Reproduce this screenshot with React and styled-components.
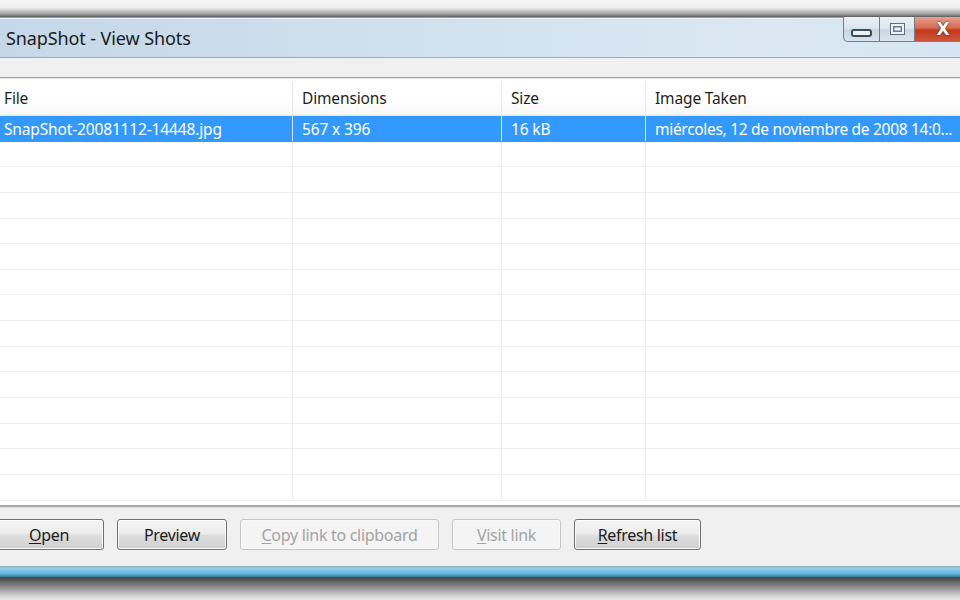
import React from 'react';
import styled, { createGlobalStyle } from 'styled-components';

const Global = createGlobalStyle`
  html, body { margin: 0; padding: 0; background: #f0f0f0; overflow: hidden; }
  * { box-sizing: border-box; }
`;

const Screen = styled.div`
  width: 960px;
  height: 600px;
  display: flex;
  flex-direction: column;
  font-family: "Noto Sans", "Open Sans", sans-serif;
  overflow: hidden;
`;

const TopShade = styled.div`
  height: 17px;
  flex: none;
  background: linear-gradient(#f6f6f6 0%, #eeeeee 45%, #9a9a9a 85%, #5a5a5a 100%);
`;

const TitleBar = styled.div`
  height: 41px;
  flex: none;
  display: flex;
  align-items: flex-start;
  justify-content: space-between;
  background: linear-gradient(90deg, #c5d8e9 0%, #cfe0ee 40%, #dbe8f3 80%, #d6e5f1 100%);
  border-top: 1px solid #8fa3b5;
  border-bottom: 1px solid #9aaab8;
  box-shadow: inset 0 1px 0 #e8f1f8;
`;

const Title = styled.div`
  padding: 8px 0 0 6px;
  font-size: 18px;
  color: #1b1b1b;
  letter-spacing: -0.1px;
`;

const Controls = styled.div`
  display: flex;
  height: 25px;
  margin-top: -1px;
  margin-right: -6px;
`;

const CtrlButton = styled.div`
  width: ${({ w }) => w}px;
  height: 25px;
  display: flex;
  align-items: center;
  justify-content: center;
  border: 1px solid #6f7f8e;
  border-top: none;
  border-left-width: ${({ first }) => (first ? 1 : 0)}px;
  border-bottom-left-radius: ${({ first }) => (first ? 5 : 0)}px;
  background: ${({ danger }) =>
    danger
      ? 'linear-gradient(#e8a193 0%, #d76b52 45%, #c0391c 55%, #d0563a 100%)'
      : 'linear-gradient(#e9f0f6 0%, #dce6ef 45%, #c9d6e2 55%, #d8e3ec 100%)'};
`;

const MinGlyph = styled.div`
  width: 21px;
  height: 8px;
  margin-top: 8px;
  border: 2px solid #3f4d5a;
  border-radius: 3px;
  background: #eef3f7;
`;

const MaxGlyph = styled.div`
  width: 15px;
  height: 12px;
  border: 1.5px solid #5f6e7a;
  background: #eef3f7;
  box-shadow: inset 0 0 0 2px #eef3f7, inset 0 0 0 3.5px #6f7e8a;
`;

const CloseGlyph = styled.div`
  font-family: "DejaVu Sans", sans-serif;
  font-weight: 700;
  font-size: 17px;
  color: #ffffff;
  text-shadow: 0 0 1px #4a2418, 0 0 2px #4a2418;
  margin-left: 6px;
`;

const Strip = styled.div`
  height: 20px;
  flex: none;
  background: #f0f0f0;
  border-bottom: 1px solid #a5a5a5;
`;

const ListView = styled.div`
  flex: none;
  height: 427px;
  background: #ffffff;
  display: flex;
  flex-direction: column;
  overflow: hidden;
  color: #1e1e1e;
  font-size: 15.5px;
  letter-spacing: -0.15px;
`;

const cols = '292px 209px 144px 1fr';

const HeaderRow = styled.div`
  display: grid;
  grid-template-columns: ${cols};
  height: 38px;
  flex: none;
  padding-top: 2px;
  background: linear-gradient(#ffffff 0%, #ffffff 60%, #f6f7f9 100%);
  border-top: 1px solid #e6e6e6;
  border-bottom: 1px solid #e2e5ea;
`;

const HeaderCell = styled.div`
  display: flex;
  align-items: center;
  padding-left: ${({ first }) => (first ? 4 : 9)}px;
  border-left: ${({ first }) => (first ? 'none' : '1px solid #e4e6ea')};
  white-space: nowrap;
`;

const Row = styled.div`
  display: grid;
  grid-template-columns: ${cols};
  height: 25.65px;
  flex: none;
  background: ${({ selected }) => (selected ? '#3399ff' : '#ffffff')};
  color: ${({ selected }) => (selected ? '#ffffff' : '#1e1e1e')};
  border-bottom: 1px solid ${({ selected }) => (selected ? '#3399ff' : '#efefef')};
`;

const Cell = styled.div`
  display: flex;
  align-items: center;
  padding-top: 2px;
  padding-left: ${({ first }) => (first ? 4 : 9)}px;
  border-left: ${({ first, selected }) =>
    first ? 'none' : `1px solid ${selected ? '#cfe6ff' : '#efefef'}`};
  white-space: nowrap;
  overflow: hidden;
  letter-spacing: ${({ tight }) => (tight ? '-0.3px' : 'inherit')};
`;

const ButtonPanel = styled.div`
  flex: none;
  height: 61px;
  background: #f0f0f0;
  border-top: 2px solid #a8a8a8;
  box-shadow: inset 0 1px 0 #e0e0e0;
  display: flex;
  align-items: flex-start;
  gap: 13px;
  padding-top: 12px;
  margin-left: -6px;
`;

const Button = styled.div`
  width: ${({ w }) => w}px;
  height: 31px;
  display: flex;
  align-items: center;
  justify-content: center;
  font-size: 16px;
  border-radius: 3px;
  border: 1px solid ${({ disabled }) => (disabled ? '#c6c6c6' : '#707070')};
  color: ${({ disabled }) => (disabled ? '#a3a3a3' : '#1c1c1c')};
  background: ${({ disabled }) =>
    disabled
      ? '#f4f4f4'
      : 'linear-gradient(#f4f4f4 0%, #ececec 45%, #dddddd 55%, #cfcfcf 100%)'};
  box-shadow: inset 0 0 0 1px ${({ disabled }) => (disabled ? '#f8f8f8' : '#fbfbfb')};
  letter-spacing: -0.3px;
  u { text-decoration: underline; text-underline-offset: 2px; }
`;

const FrameBottom = styled.div`
  height: 12px;
  flex: none;
  background: linear-gradient(#9aa8b2 0%, #8fd0ec 20%, #6ab8dc 60%, #3f8fb4 85%, #21414f 100%);
`;

const BottomShade = styled.div`
  flex: 1;
  background: linear-gradient(#4a4a4a 0%, #8a8a8a 40%, #cfcfcf 80%, #e8e8e8 100%);
`;

const rows = [
  ['SnapShot-20081112-14448.jpg', '567 x 396', '16 kB', 'miércoles, 12 de noviembre de 2008 14:0...'],
];

export default function App() {
  const empty = Array.from({ length: 14 });
  return (
    <Screen>
      <Global />
      <TopShade />
      <TitleBar>
        <Title>SnapShot - View Shots</Title>
        <Controls>
          <CtrlButton w={37} first>
            <MinGlyph />
          </CtrlButton>
          <CtrlButton w={35}>
            <MaxGlyph />
          </CtrlButton>
          <CtrlButton w={51} danger>
            <CloseGlyph>X</CloseGlyph>
          </CtrlButton>
        </Controls>
      </TitleBar>
      <Strip />
      <ListView>
        <HeaderRow>
          <HeaderCell first>File</HeaderCell>
          <HeaderCell>Dimensions</HeaderCell>
          <HeaderCell>Size</HeaderCell>
          <HeaderCell>Image Taken</HeaderCell>
        </HeaderRow>
        {rows.map((r, i) => (
          <Row key={i} selected>
            {r.map((c, j) => (
              <Cell key={j} first={j === 0} tight={j === 3} selected>
                {c}
              </Cell>
            ))}
          </Row>
        ))}
        {empty.map((_, i) => (
          <Row key={'e' + i}>
            <Cell first />
            <Cell />
            <Cell />
            <Cell />
          </Row>
        ))}
      </ListView>
      <ButtonPanel>
        <Button w={110}><span><u>O</u>pen</span></Button>
        <Button w={110}>Preview</Button>
        <Button w={199} disabled><span><u>C</u>opy link to clipboard</span></Button>
        <Button w={109} disabled><span><u>V</u>isit link</span></Button>
        <Button w={127}><span><u>R</u>efresh list</span></Button>
      </ButtonPanel>
      <FrameBottom />
      <BottomShade />
    </Screen>
  );
}
